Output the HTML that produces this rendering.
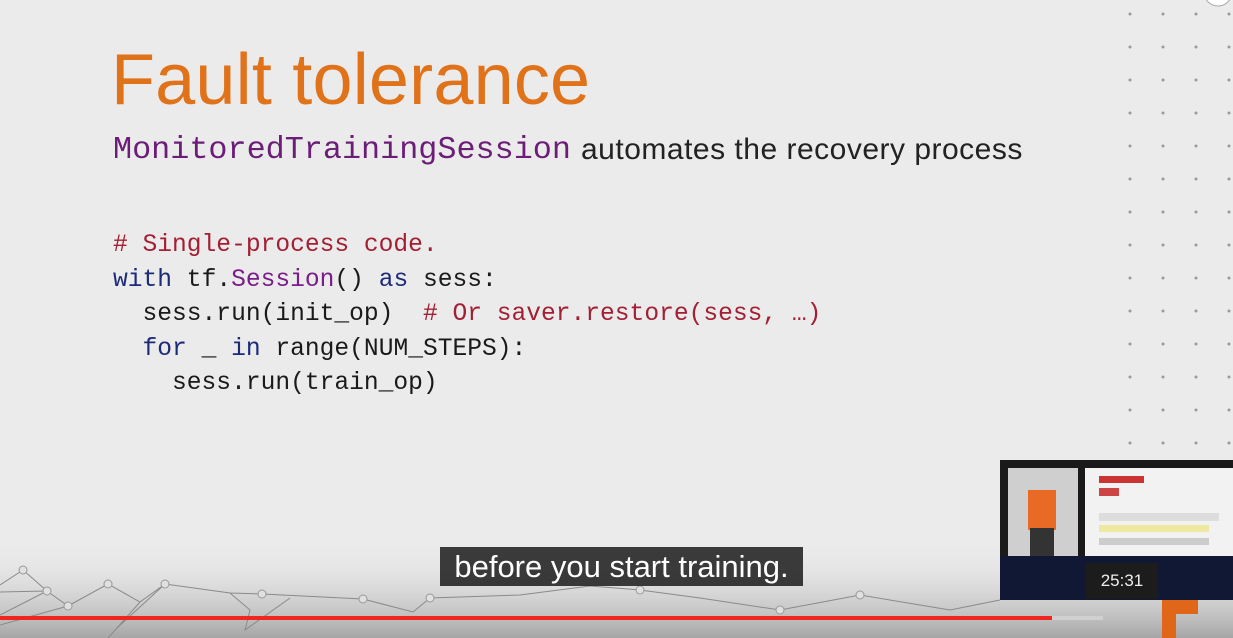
<!DOCTYPE html><html><head><style>
html,body{margin:0;padding:0}
body{width:1233px;height:638px;overflow:hidden;position:relative;background:#ebebeb;font-family:"Liberation Sans",sans-serif}
.t{position:absolute;white-space:pre}
.mono{font-family:"Liberation Mono",monospace}
.code{font-size:24.6px;line-height:34.5px;color:#1a1a1a;left:113px;top:229px}
.c{color:#a31f34}.k{color:#1d2a7a}.p{color:#7a1d8a}
</style></head><body>
<svg width="1233" height="638" style="position:absolute;left:0;top:0">
<defs><linearGradient id="g" x1="0" y1="0" x2="0" y2="1"><stop offset="0" stop-color="#ebebeb" stop-opacity="0"/><stop offset="1" stop-color="#a5a5a5"/></linearGradient></defs>
<g id="dots" fill="#9a9a9a"></g>
<rect x="0" y="540" width="1233" height="98" fill="url(#g)"/>
<g stroke="#8a8a8a" stroke-width="1" fill="none">
<polyline points="0,585 23,570 47,591 68,606 108,584 140,602 165,584 230,593 262,594 363,599 413,612 430,598 520,595 590,586"/>
<polyline points="0,592 47,591 0,615"/><polyline points="68,606 0,625"/><polyline points="140,602 117,628 108,638"/><polyline points="165,584 117,628"/>
<polyline points="230,593 250,610 245,630 290,598"/>
<polyline points="590,586 640,590 700,598 780,610 860,595 950,610 1000,600"/>
</g>
<g stroke="#999" fill="#e0e0e0"><circle cx="23" cy="570" r="4"/><circle cx="47" cy="591" r="4"/><circle cx="68" cy="606" r="4"/><circle cx="108" cy="584" r="4"/><circle cx="165" cy="584" r="4"/><circle cx="262" cy="594" r="4"/><circle cx="363" cy="599" r="4"/><circle cx="430" cy="598" r="4"/><circle cx="640" cy="590" r="4"/><circle cx="780" cy="610" r="4"/><circle cx="860" cy="595" r="4"/></g>
<rect x="0" y="616" width="1052" height="4" fill="#f0261e"/>
<rect x="1052" y="616" width="51" height="4" fill="#d0d0d0"/>
<g fill="#e0661a"><rect x="1162" y="600" width="36" height="14"/><rect x="1162" y="614" width="14" height="24"/></g>
<circle cx="1218" cy="-8" r="14" fill="#fff" stroke="#aaa"/>
</svg>
<script>
var g=document.getElementById('dots'),s='';
for(var y=14;y<450;y+=33)for(var x=1130;x<1233;x+=33)s+='<circle cx="'+x+'" cy="'+y+'" r="1.5"/>';
g.innerHTML=s;
</script>
<div class="t" style="left:111px;top:39px;font-size:72px;color:#e0721a;letter-spacing:0.2px">Fault tolerance</div>
<div class="t mono p" style="left:113px;top:132px;font-size:31.8px;color:#6b1d78">MonitoredTrainingSession</div>
<div class="t" style="left:581px;top:133px;font-size:30px;color:#222;letter-spacing:0.5px">automates the recovery process</div>
<div class="t mono code"><span class="c"># Single-process code.</span>
<span class="k">with</span> tf.<span class="p">Session</span>() <span class="k">as</span> sess:
  sess.run(init_op)  <span class="c"># Or saver.restore(sess, …)</span>
  <span class="k">for</span> _ <span class="k">in</span> range(NUM_STEPS):
    sess.run(train_op)</div>
<div class="t" style="left:440px;top:547px;width:363px;height:39px;background:rgba(20,20,20,0.82);color:#fff;font-size:31px;line-height:40px;text-align:center">before you start training.</div>
<div style="position:absolute;left:1000px;top:460px;width:233px;height:140px;background:#1a1a1a">
<div style="position:absolute;left:8px;top:8px;width:70px;height:88px;background:#cfcfcf"><div style="position:absolute;left:20px;top:22px;width:28px;height:40px;background:#e86a24"></div><div style="position:absolute;left:22px;top:60px;width:24px;height:28px;background:#333"></div></div>
<div style="position:absolute;left:85px;top:8px;width:148px;height:88px;background:#f2f2f2"><div style="position:absolute;left:14px;top:8px;width:45px;height:7px;background:#c33"></div><div style="position:absolute;left:14px;top:20px;width:20px;height:8px;background:#c44"></div><div style="position:absolute;left:14px;top:45px;width:120px;height:8px;background:#ddd"></div><div style="position:absolute;left:14px;top:57px;width:110px;height:7px;background:#eee8a0"></div><div style="position:absolute;left:14px;top:70px;width:110px;height:7px;background:#ccc"></div></div>
<div style="position:absolute;left:0;top:96px;width:233px;height:44px;background:#111833"></div>
<div style="position:absolute;left:86px;top:103px;width:72px;height:36px;background:#1c1c1c;color:#eee;font-size:17px;line-height:36px;text-align:center">25:31</div>
</div>
</body></html>
